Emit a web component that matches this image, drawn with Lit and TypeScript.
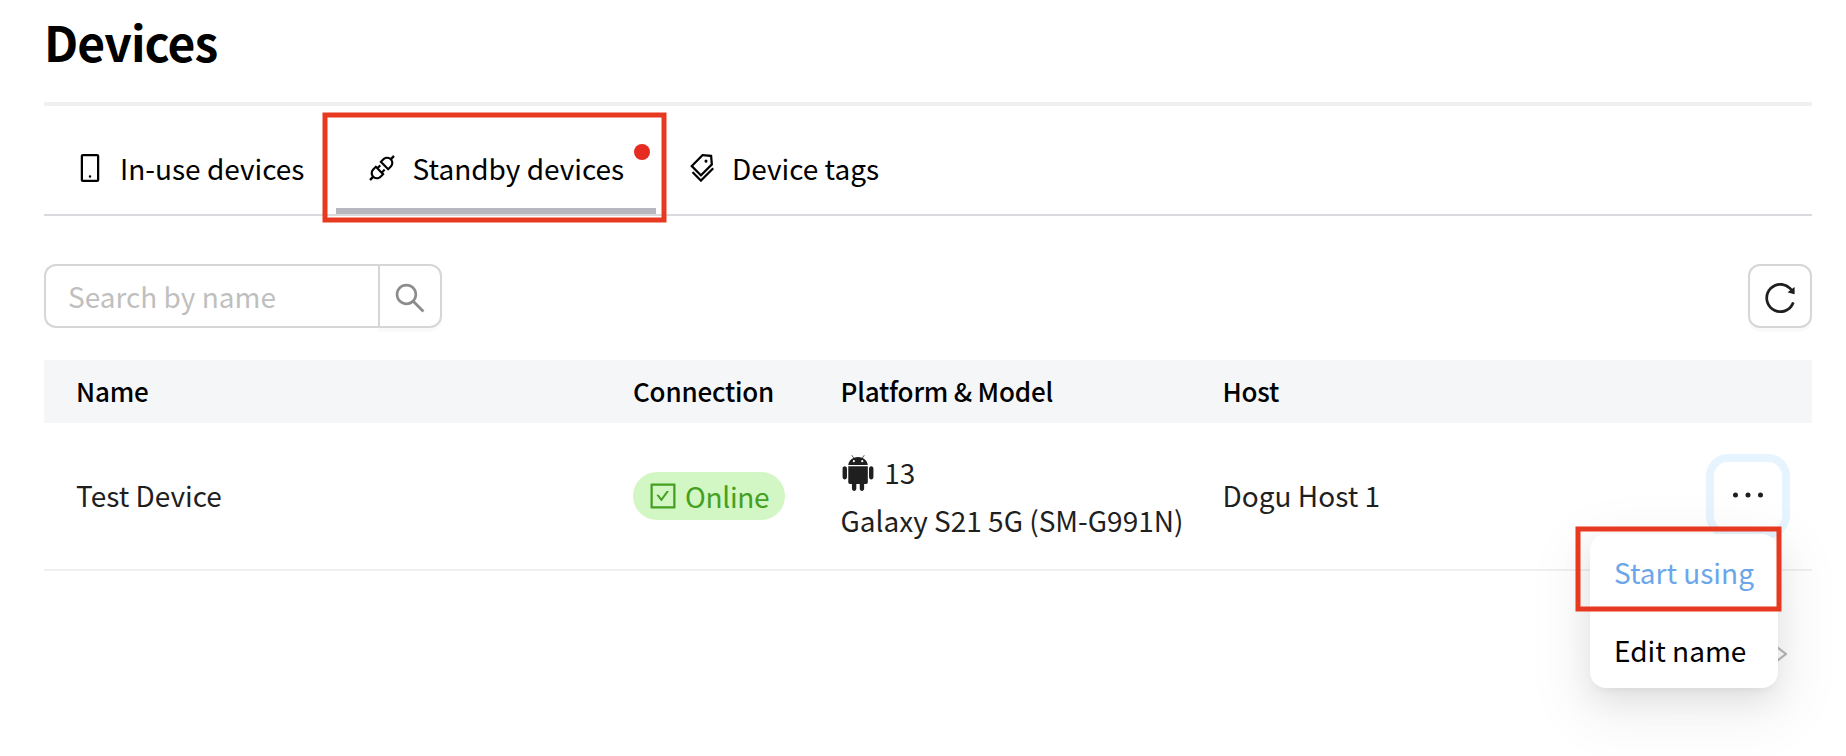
import { LitElement, html, css, svg } from "lit";
import { customElement, property } from "lit/decorators.js";

const ICONS: Record<string, string> = {
  mobile:
    "M744 62H280c-35.3 0-64 28.7-64 64v768c0 35.3 28.7 64 64 64h464c35.3 0 64-28.7 64-64V126c0-35.3-28.7-64-64-64zm-8 824H288V134h448v752zM472 784a40 40 0 1080 0 40 40 0 10-80 0z",
  api: "M917.7 148.8l-42.4-42.4c-1.6-1.6-3.6-2.3-5.7-2.3s-4.1.8-5.7 2.3l-76.1 76.1a199.27 199.27 0 00-112.1-34.3c-51.2 0-102.4 19.5-141.5 58.6L432.3 308.7a8.03 8.03 0 000 11.3L704 591.7c1.6 1.6 3.6 2.3 5.7 2.3 2 0 4.1-.8 5.7-2.3l101.9-101.9c68.9-69 77-175.7 24.3-253.5l76.1-76.1c3.1-3.2 3.1-8.3 0-11.4zM769.1 441.7l-59.4 59.4-186.8-186.8 59.4-59.4c24.9-24.9 58.1-38.7 93.4-38.7 35.3 0 68.4 13.7 93.4 38.7 24.9 24.9 38.7 58.1 38.7 93.4 0 35.3-13.8 68.4-38.7 93.4zm-190.2 105a8.03 8.03 0 00-11.3 0L501 613.3 410.7 523l66.7-66.7c3.1-3.1 3.1-8.2 0-11.3L441 408.6a8.03 8.03 0 00-11.3 0L363 475.3l-43-43a7.85 7.85 0 00-5.7-2.3c-2 0-4.1.8-5.7 2.3L206.8 534.2c-68.9 69-77 175.7-24.3 253.5l-76.1 76.1a8.03 8.03 0 000 11.3l42.4 42.4c1.6 1.6 3.6 2.3 5.7 2.3s4.1-.8 5.7-2.3l76.1-76.1c33.7 22.9 72.9 34.3 112.1 34.3 51.2 0 102.4-19.5 141.5-58.6l101.9-101.9c3.1-3.1 3.1-8.2 0-11.3l-43-43 66.7-66.7c3.1-3.1 3.1-8.2 0-11.3l-36.6-36.2zM441.7 769.1a131.32 131.32 0 01-93.4 38.7c-35.3 0-68.4-13.7-93.4-38.7a131.32 131.32 0 01-38.7-93.4c0-35.3 13.7-68.4 38.7-93.4l59.4-59.4 186.8 186.8-59.4 59.4z",
  tags: "M483.2 790.3L861.4 412c1.7-1.7 2.5-4 2.3-6.3l-25.5-301.4c-.7-7.8-6.8-13.9-14.6-14.6L522.2 64.3c-2.3-.2-4.7.6-6.3 2.3L137.7 444.8a8.03 8.03 0 000 11.3l334.2 334.2c3.1 3.2 8.2 3.2 11.3 0zm62.6-651.7l224.6 19 19 224.6L477.5 694 233.9 450.5l311.9-311.9zm60.16 186.23a48 48 0 1067.88-67.89 48 48 0 10-67.88 67.89zM889.7 539.8l-39.6-39.5a8.03 8.03 0 00-11.3 0l-362 361.3-237.6-237a8.03 8.03 0 00-11.3 0l-39.6 39.5a8.03 8.03 0 000 11.3l243.2 242.8 39.6 39.5c3.1 3.1 8.2 3.1 11.3 0l407.3-406.6c3.1-3.1 3.1-8.2 0-11.3z",
  search:
    "M909.6 854.5L649.9 594.8C690.2 542.7 712 479 712 412c0-80.2-31.3-155.4-87.9-212.1-56.6-56.7-132-87.9-212.1-87.9s-155.5 31.3-212.1 87.9C143.2 256.5 112 331.8 112 412c0 80.1 31.3 155.5 87.9 212.1C256.5 680.8 331.8 712 412 712c67 0 130.6-21.8 182.7-62l259.7 259.6a8.2 8.2 0 0011.6 0l43.6-43.5a8.2 8.2 0 000-11.6zM570.4 570.4C528 612.7 471.8 636 412 636s-116-23.3-158.4-65.6C211.3 528 188 471.8 188 412s23.3-116.1 65.6-158.4C296 211.3 352.2 188 412 188s116.1 23.2 158.4 65.6S636 352.2 636 412s-23.3 116.1-65.6 158.4z",
  reload:
    "M909.1 209.3l-56.4 44.1C775.8 155.1 656.2 92 521.9 92 290 92 102.3 279.5 102 511.5 101.7 743.7 289.8 932 521.9 932c181.3 0 335.8-115 394.6-276.1 1.5-4.2-.7-8.9-4.9-10.3l-56.7-19.5a8 8 0 00-10.1 4.8c-1.8 5-3.8 10-5.9 14.9-17.3 41-42.1 77.8-73.7 109.4A344.77 344.77 0 01655.9 829c-42.3 17.9-87.4 27-133.8 27-46.5 0-91.5-9.1-133.8-27A341.5 341.5 0 01279 755.2a342.16 342.16 0 01-73.7-109.4c-17.9-42.4-27-87.4-27-133.9s9.1-91.5 27-133.9c17.3-41 42.1-77.8 73.7-109.4 31.6-31.6 68.4-56.4 109.3-73.8 42.3-17.9 87.4-27 133.8-27 46.5 0 91.5 9.1 133.8 27a341.5 341.5 0 01109.3 73.8c9.9 9.9 19.2 20.4 27.8 31.4l-60.2 47a8 8 0 003 14.1l175.6 43c5 1.2 9.9-2.6 9.9-7.7l.8-180.9c-.1-6.6-7.8-10.3-13-6.2z",
  check:
    "M433.1 657.7a31.8 31.8 0 0051.7 0l210.6-292c3.8-5.3 0-12.7-6.5-12.7h-46.9c-10.2 0-19.9 4.9-25.9 13.3L459 584.3l-71.2-98.8c-6-8.3-15.6-13.3-25.9-13.3H315c-6.5 0-10.3 7.4-6.5 12.7l124.6 172.8zM880 112H144c-17.7 0-32 14.3-32 32v736c0 17.7 14.3 32 32 32h736c17.7 0 32-14.3 32-32V144c0-17.7-14.3-32-32-32zm-40 728H184V184h656v656z",
  android:
    "M270.1 741.7c0 23.4 19.1 42.5 42.6 42.5h48.7v120.4c0 30.5 24.5 55.4 54.6 55.4 30.2 0 54.6-24.8 54.6-55.4V784.1h85v120.4c0 30.5 24.5 55.4 54.6 55.4 30.2 0 54.6-24.8 54.6-55.4V784.1h48.7c23.5 0 42.6-19.1 42.6-42.5V346.4h-486v395.3zm357.1-600.1l44.9-65c2.6-3.8 2-8.9-1.5-11.4-3.5-2.4-8.5-1.2-11.1 2.6l-46.6 67.6c-30.7-12.1-64.9-18.8-100.8-18.8-35.9 0-70.1 6.7-100.8 18.8l-46.6-67.5c-2.6-3.8-7.6-5.1-11.1-2.6-3.5 2.4-4.1 7.4-1.5 11.4l44.9 65c-71.4 33.2-121.4 96.1-127.8 169.6h486c-6.6-73.6-56.7-136.5-128-169.7zM409.5 244.1a26.9 26.9 0 1126.9-26.9 26.97 26.97 0 01-26.9 26.9zm208.4 0a26.9 26.9 0 1126.9-26.9 26.97 26.97 0 01-26.9 26.9zm223.4 100.7c-30.2 0-54.6 24.8-54.6 55.4v216.4c0 30.5 24.5 55.4 54.6 55.4 30.2 0 54.6-24.8 54.6-55.4V400.1c.1-30.6-24.3-55.3-54.6-55.3zm-658.6 0c-30.2 0-54.6 24.8-54.6 55.4v216.4c0 30.5 24.5 55.4 54.6 55.4 30.2 0 54.6-24.8 54.6-55.4V400.1c0-30.6-24.5-55.3-54.6-55.3z",
  ellipsis:
    "M176 511a56 56 0 10112 0 56 56 0 10-112 0zm280 0a56 56 0 10112 0 56 56 0 10-112 0zm280 0a56 56 0 10112 0 56 56 0 10-112 0z",
  right:
    "M765.7 486.8L314.9 134.7A7.97 7.97 0 00302 141v77.3c0 4.9 2.3 9.6 6.1 12.6l360 281.1-360 281.1c-3.9 3-6.1 7.7-6.1 12.6V883c0 6.7 7.7 10.4 12.9 6.3l450.8-352.1a31.96 31.96 0 000-50.4z",
};

@customElement("ui-icon")
class UiIcon extends LitElement {
  @property() name = "";
  @property({ type: Number }) size = 28;

  static styles = css`
    :host {
      display: inline-flex;
      flex: none;
    }
    .glyph {
      display: block;
      fill: currentColor;
      overflow: visible;
    }
  `;

  render() {
    return html`<svg class="glyph" width=${this.size} height=${this.size} viewBox="64 64 896 896">
      ${svg`<path d=${ICONS[this.name] ?? ""}></path>`}
    </svg>`;
  }
}

@customElement("app-root")
class AppRoot extends LitElement {
  static styles = css`
    :host {
      display: block;
      box-sizing: border-box;
      height: 756px;
      padding: 0 34px 0 44px;
      overflow: hidden;
      background: #fff;
      color: #000;
      font-family: "Noto Sans CJK KR", "Noto Sans", sans-serif;
      font-size: 28px;
      line-height: 44px;
    }
    * {
      box-sizing: border-box;
    }
    .title {
      margin: 0;
      padding: 6px 0 26px;
      border-bottom: 4px solid #eff0f2;
      font-size: 48px;
      line-height: 70px;
      font-weight: 700;
      letter-spacing: -0.9px;
    }
    .tabs {
      display: flex;
      border-bottom: 2px solid #d9d9de;
    }
    .tab {
      position: relative;
      display: flex;
      align-items: center;
      gap: 16px;
      height: 108px;
      padding: 16px 32px 0;
      white-space: nowrap;
    }
    .tab.active {
      width: 320px;
      gap: 16.6px;
      box-shadow: inset 0 -6px #b6b7bf;
    }
    .tab.first {
      width: 292px;
    }
    .dot {
      position: absolute;
      top: 38px;
      right: 6px;
      width: 16px;
      height: 16px;
      border-radius: 50%;
      background: #e62b22;
    }
    .frame {
      position: absolute;
      fill: none;
      stroke: #e6391f;
      stroke-width: 5;
      pointer-events: none;
    }
    .frame.on-tab {
      left: -14px;
      top: 6px;
    }
    .frame.on-item {
      left: -15px;
      top: -8px;
    }
    .toolbar {
      display: flex;
      justify-content: space-between;
      margin: 48px 0 32px;
    }
    .search {
      display: flex;
      width: 398px;
      height: 64px;
    }
    .field {
      flex: 1;
      padding: 8px 22px;
      border: 2px solid #d6d6d6;
      border-right: 0;
      border-radius: 12px 0 0 12px;
      color: #bfbfbf;
    }
    .button {
      display: flex;
      align-items: center;
      justify-content: center;
      width: 64px;
      height: 64px;
      padding-top: 4px;
      border: 2px solid #d6d6d6;
      border-radius: 12px;
      box-shadow: 0 4px 0 rgba(0, 0, 0, 0.02);
      color: #1f1f1f;
    }
    .button.go {
      border-radius: 0 12px 12px 0;
      color: #8c8c8c;
    }
    .row {
      display: grid;
      grid-template-columns: 557px 207.5px 382px 1fr;
      align-items: center;
      padding-left: 32px;
    }
    .row.head {
      height: 63px;
      padding-bottom: 1px;
      background: #f5f6f8;
      font-size: 26px;
      font-weight: 500;
      letter-spacing: -0.2px;
    }
    .row.body {
      height: 148px;
      border-bottom: 2px solid #f0f0f0;
      color: #1f1f1f;
    }
    .text {
      padding-bottom: 2px;
    }
    .pill {
      display: inline-flex;
      align-items: center;
      gap: 8px;
      height: 48px;
      padding: 0 16px;
      border-radius: 24px;
      background: #d3f6c5;
      color: #459f20;
      letter-spacing: -0.3px;
    }
    .status {
      display: flex;
      padding-bottom: 1px;
    }
    .model {
      line-height: 48px;
      white-space: nowrap;
    }
    .platform {
      display: flex;
      align-items: center;
      gap: 8.5px;
    }
    .robot {
      margin: 2px 0 0 -0.8px;
    }
    .last {
      display: flex;
      align-items: center;
      justify-content: space-between;
    }
    .more {
      position: relative;
      display: flex;
      align-items: center;
      justify-content: center;
      width: 64px;
      height: 64px;
      margin-right: 32px;
      padding: 0 1px 3px 0;
      border-radius: 12px;
      outline: 8px solid #e6f4ff;
      outline-offset: 2px;
    }
    .menu {
      position: absolute;
      z-index: 2;
      top: 70px;
      right: 2px;
      width: 188px;
      border-radius: 16px;
      background: #fff;
      color: #000;
      box-shadow:
        0 12px 32px 0 rgba(0, 0, 0, 0.08),
        0 6px 12px -8px rgba(0, 0, 0, 0.12),
        0 18px 56px 16px rgba(0, 0, 0, 0.05);
    }
    .item {
      position: relative;
      display: flex;
      align-items: center;
      height: 77px;
      padding: 0 24px;
      white-space: nowrap;
    }
    .item.hot {
      padding-bottom: 2px;
      color: #6ca6ea;
    }
    .pager {
      display: flex;
      justify-content: flex-end;
      padding: 71px 20px 0 0;
      color: #b8b8b8;
    }
  `;

  render() {
    return html`
      <h1 class="title">Devices</h1>
      <nav class="tabs">
        <div class="tab first"><ui-icon name="mobile"></ui-icon><span>In-use devices</span></div>
        <div class="tab active">
          <ui-icon name="api"></ui-icon><span>Standby devices</span>
          <i class="dot"></i>
          <svg class="frame on-tab" width="346" height="112">
            <rect x="3" y="3" width="339" height="105"></rect>
          </svg>
        </div>
        <div class="tab"><ui-icon name="tags"></ui-icon><span>Device tags</span></div>
      </nav>
      <div class="toolbar">
        <div class="search">
          <div class="field">Search by name</div>
          <div class="button go"><ui-icon name="search" size="32"></ui-icon></div>
        </div>
        <div class="button"><ui-icon name="reload" size="32"></ui-icon></div>
      </div>
      <div class="row head">
        <div>Name</div>
        <div>Connection</div>
        <div>Platform &amp; Model</div>
        <div>Host</div>
      </div>
      <div class="row body">
        <div class="text">Test Device</div>
        <div class="status">
          <span class="pill"><ui-icon name="check"></ui-icon>Online</span>
        </div>
        <div class="model">
          <div class="platform"><ui-icon class="robot" name="android" size="36"></ui-icon>13</div>
          <div>Galaxy S21 5G (SM-G991N)</div>
        </div>
        <div class="last">
          <span class="text">Dogu Host 1</span>
          <div class="more">
            <ui-icon name="ellipsis" size="40"></ui-icon>
            <div class="menu">
              <div class="item hot">
                Start using
                <svg class="frame on-item" width="208" height="88">
                  <rect x="3" y="3" width="201" height="80"></rect>
                </svg>
              </div>
              <div class="item">Edit name</div>
            </div>
          </div>
        </div>
      </div>
      <div class="pager"><ui-icon name="right" size="24"></ui-icon></div>
    `;
  }
}
